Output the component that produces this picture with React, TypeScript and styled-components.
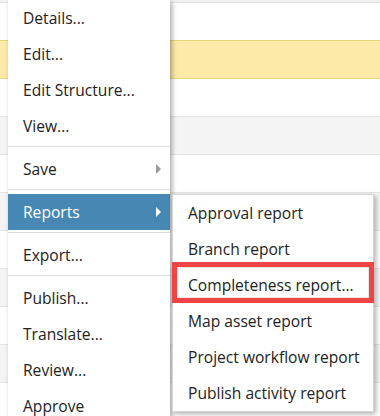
import React from "react";
import styled, { createGlobalStyle } from "styled-components";

const Global = createGlobalStyle`
  html, body { margin: 0; padding: 0; }
  body {
    width: 380px;
    height: 416px;
    overflow: hidden;
    background: #fff;
    font-family: "Open Sans", "Noto Sans", sans-serif;
  }
`;

const Page = styled.div`
  position: relative;
  width: 380px;
  height: 416px;
  overflow: hidden;
  background: #fff;
`;

const Table = styled.div`
  display: flex;
  flex-direction: column;
`;

const HeaderStrip = styled.div`
  height: 2px;
  background: #f1f1f1;
  border-bottom: 1px solid #e4e4e4;
`;

type RowKind = "plain" | "alt" | "selected";

const Row = styled.div<{ $kind: RowKind }>`
  height: 37px;
  border-bottom: 1px solid
    ${(p) => (p.$kind === "selected" ? "#e9d37c" : "#e6e6e6")};
  background: ${(p) =>
    p.$kind === "selected" ? "#fdeaa8" : p.$kind === "alt" ? "#f4f4f4" : "#fff"};
  ${(p) => (p.$kind === "selected" ? "margin-top: -1px; border-top: 1px solid #e9d37c;" : "")}
`;

const Menu = styled.ul`
  position: absolute;
  left: 8px;
  top: 0;
  width: 162px;
  margin: 0;
  padding: 0;
  list-style: none;
  background: #fff;
  box-shadow: 2px 2px 5px rgba(0, 0, 0, 0.35);
`;

const SubMenu = styled.ul`
  position: absolute;
  left: 172px;
  top: 194px;
  width: 200px;
  margin: 0;
  padding: 0;
  list-style: none;
  background: #fff;
  border: 1px solid #d4d4d4;
  box-shadow: 2px 2px 5px rgba(0, 0, 0, 0.3);
`;

const Item = styled.li<{ $active?: boolean }>`
  position: relative;
  display: flex;
  align-items: center;
  justify-content: space-between;
  height: 36px;
  line-height: 36px;
  padding: 0 9px 0 15px;
  font-size: 15.6px;
  color: ${(p) => (p.$active ? "#fff" : "#222")};
  background: ${(p) => (p.$active ? "#4787b3" : "transparent")};
  white-space: nowrap;
`;

const Separator = styled.li`
  height: 1px;
  margin: 2px 0 4px;
  background: #dcdcdc;
`;

const Arrow = styled.span<{ $light?: boolean }>`
  width: 0;
  height: 0;
  border-top: 5px solid transparent;
  border-bottom: 5px solid transparent;
  border-left: 5px solid ${(p) => (p.$light ? "#fff" : "#999")};
`;

const Highlight = styled.span`
  position: absolute;
  left: -1px;
  right: -1px;
  top: -5px;
  bottom: 0;
  border: 5px solid #ef4446;
  box-shadow: inset 0 0 2px rgba(0, 0, 0, 0.35);
  pointer-events: none;
`;

const rows: RowKind[] = [
  "plain",
  "selected",
  "plain",
  "alt",
  "plain",
  "alt",
  "plain",
  "alt",
  "plain",
  "alt",
  "plain",
];

type Entry = { label: string; sub?: boolean; active?: boolean } | "sep";

const mainItems: Entry[] = [
  { label: "Details..." },
  { label: "Edit..." },
  { label: "Edit Structure..." },
  { label: "View..." },
  "sep",
  { label: "Save", sub: true },
  "sep",
  { label: "Reports", sub: true, active: true },
  "sep",
  { label: "Export..." },
  "sep",
  { label: "Publish..." },
  { label: "Translate..." },
  { label: "Review..." },
  { label: "Approve" },
];

const reports = [
  "Approval report",
  "Branch report",
  "Completeness report...",
  "Map asset report",
  "Project workflow report",
  "Publish activity report",
];

export default function App() {
  return (
    <Page>
      <Global />
      <Table>
        <HeaderStrip />
        {rows.map((k, i) => (
          <Row key={i} $kind={k} />
        ))}
      </Table>
      <Menu>
        {mainItems.map((e, i) =>
          e === "sep" ? (
            <Separator key={i} />
          ) : (
            <Item key={i} $active={e.active}>
              <span>{e.label}</span>
              {e.sub && <Arrow $light={e.active} />}
            </Item>
          )
        )}
      </Menu>
      <SubMenu>
        {reports.map((r, i) => (
          <Item key={r}>
            <span>{r}</span>
            {i === 2 && <Highlight />}
          </Item>
        ))}
      </SubMenu>
    </Page>
  );
}
